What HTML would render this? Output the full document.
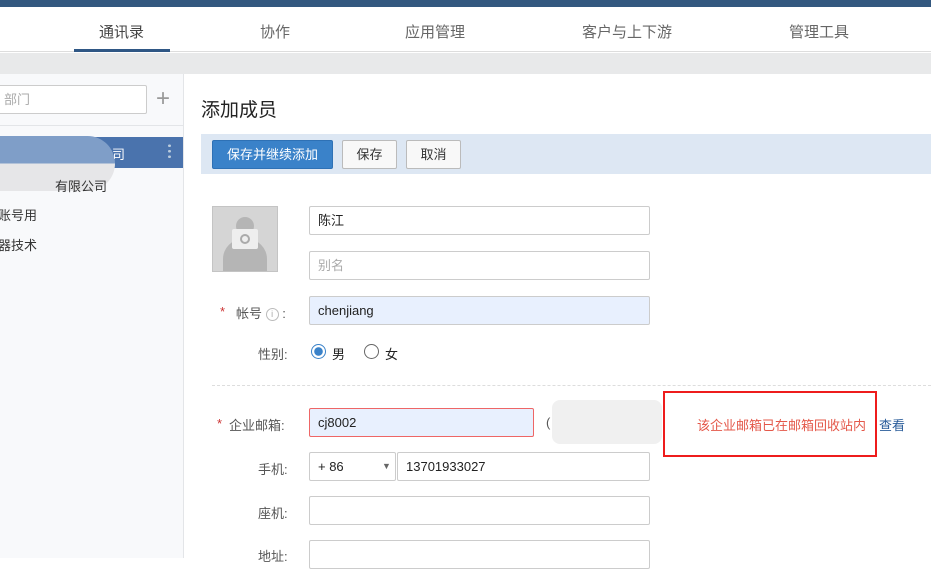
<!DOCTYPE html>
<html><head><meta charset="utf-8"><style>
*{margin:0;padding:0;box-sizing:border-box}
body{width:931px;height:558px;overflow:hidden;background:#fff;font-family:"Liberation Sans","Noto Sans CJK SC",sans-serif;font-size:13px;color:#333;position:relative}
.a{position:absolute}
.inp{position:absolute;border:1px solid #ccc;border-radius:2px;background:#fff;height:29px;line-height:27px;padding-left:8px;font-size:13px}
.btn{position:absolute;border:1px solid #bbb;border-radius:2px;background:#f8f8f8;height:29px;line-height:27px;text-align:center;font-size:13px;color:#333}
</style></head><body>
<div class="a" style="left:0;top:0;width:931px;height:7px;background:#33587f"></div>
<div class="a" style="left:0;top:7px;width:931px;height:45px;background:#fff;border-bottom:1px solid #ddd"></div>
<div class="a" style="left:99px;top:21px;font-size:15px;color:#444">通讯录</div>
<div class="a" style="left:74px;top:49px;width:96px;height:3px;background:#2f5785"></div>
<div class="a" style="left:260px;top:21px;font-size:15px;color:#666">协作</div>
<div class="a" style="left:405px;top:21px;font-size:15px;color:#666">应用管理</div>
<div class="a" style="left:582px;top:21px;font-size:15px;color:#666">客户与上下游</div>
<div class="a" style="left:789px;top:21px;font-size:15px;color:#666">管理工具</div>
<div class="a" style="left:0;top:53px;width:931px;height:21px;background:#e8e9ea"></div>
<div class="a" style="left:0;top:74px;width:184px;height:484px;background:#f8f9fb;border-right:1px solid #e3e5e8"></div>
<div class="inp" style="left:-5px;top:85px;width:152px;height:29px;color:#aaa;padding-left:8px">部门</div>
<div class="a" style="left:156px;top:85px;font-size:24px;color:#999;line-height:28px">+</div>
<div class="a" style="left:0;top:125px;width:183px;height:1px;background:#e3e5e8"></div>
<div class="a" style="left:0;top:137px;width:183px;height:31px;background:#4a73ad"></div>
<div class="a" style="left:0;top:136px;width:115px;height:55px;border-radius:0 30px 30px 0;background:linear-gradient(#7f9ec8 50%,#e6e6e8 50%)"></div>
<div class="a" style="left:112px;top:144px;color:#fff">司</div>
<div class="a" style="left:168px;top:143px;width:3px;height:16px;background:radial-gradient(circle,#bcd 1.3px,transparent 1.5px) 0 0/3px 5.5px"></div>
<div class="a" style="left:55px;top:176px;color:#333">有限公司</div>
<div class="a" style="left:-2px;top:205px;color:#333">账号用</div>
<div class="a" style="left:-2px;top:235px;color:#333">器技术</div>
<div class="a" style="left:201px;top:95px;font-size:19px;color:#222">添加成员</div>
<div class="a" style="left:201px;top:134px;width:730px;height:40px;background:#dde7f3"></div>
<div class="btn" style="left:212px;top:140px;width:121px;background:#3a82c9;border-color:#2e71b5;color:#fff">保存并继续添加</div>
<div class="btn" style="left:342px;top:140px;width:55px">保存</div>
<div class="btn" style="left:406px;top:140px;width:55px">取消</div>
<div class="a" style="left:212px;top:206px;width:66px;height:66px;background:#d5d5d5;border:1px solid #c4c4c4;overflow:hidden">
<div class="a" style="left:23px;top:10px;width:18px;height:18px;border-radius:50%;background:#b5b5b5"></div>
<div class="a" style="left:10px;top:32px;width:44px;height:34px;border-radius:20px 20px 0 0;background:#b5b5b5"></div>
<div class="a" style="left:19px;top:22px;width:26px;height:20px;background:#eee;border-radius:2px"></div>
<div class="a" style="left:27px;top:27px;width:10px;height:10px;border-radius:50%;border:2px solid #aaa"></div>
</div>
<div class="inp" style="left:309px;top:206px;width:341px;color:#222">陈江</div>
<div class="inp" style="left:309px;top:251px;width:341px;color:#aaa">别名</div>
<div class="a" style="left:220px;top:304px;color:#c33">*</div>
<div class="a" style="left:236px;top:303px;color:#555">帐号 <span style="display:inline-block;width:13px;height:13px;border:1px solid #bbb;border-radius:50%;font-size:9px;line-height:11px;text-align:center;color:#aaa;vertical-align:1px">i</span> :</div>
<div class="inp" style="left:309px;top:296px;width:341px;background:#e8f0fe;color:#222">chenjiang</div>
<div class="a" style="left:258px;top:344px;color:#555">性别:</div>
<div class="a" style="left:311px;top:344px;width:15px;height:15px;border-radius:50%;border:1.5px solid #3a82c9;background:radial-gradient(circle,#3a82c9 4px,#fff 4.5px)"></div>
<div class="a" style="left:332px;top:344px;color:#222">男</div>
<div class="a" style="left:364px;top:344px;width:15px;height:15px;border-radius:50%;border:1px solid #666"></div>
<div class="a" style="left:385px;top:344px;color:#222">女</div>
<div class="a" style="left:212px;top:385px;width:719px;border-top:1px dashed #ddd"></div>
<div class="a" style="left:217px;top:416px;color:#c33">*</div>
<div class="a" style="left:229px;top:415px;color:#555">企业邮箱:</div>
<div class="inp" style="left:309px;top:408px;width:225px;background:#e8f0fe;border-color:#e66;color:#222">cj8002</div>
<div class="a" style="left:546px;top:415px;color:#555">(</div>
<div class="a" style="left:552px;top:400px;width:110px;height:44px;background:#ececec;border-radius:8px;opacity:.8"></div>
<div class="a" style="left:697px;top:415px;color:#e4584a">该企业邮箱已在邮箱回收站内</div>
<div class="a" style="left:879px;top:415px;color:#2a5c9a">查看</div>
<div class="a" style="left:663px;top:391px;width:214px;height:66px;border:2.5px solid #ee1c1c"></div>
<div class="a" style="left:258px;top:459px;color:#555">手机:</div>
<div class="inp" style="left:309px;top:452px;width:87px;color:#222">+ 86<span style="position:absolute;left:72px;font-size:9px;color:#666">▼</span></div>
<div class="inp" style="left:397px;top:452px;width:253px;color:#222">13701933027</div>
<div class="a" style="left:258px;top:503px;color:#555">座机:</div>
<div class="inp" style="left:309px;top:496px;width:341px"></div>
<div class="a" style="left:258px;top:546px;color:#555">地址:</div>
<div class="inp" style="left:309px;top:540px;width:341px"></div>
</body></html>
